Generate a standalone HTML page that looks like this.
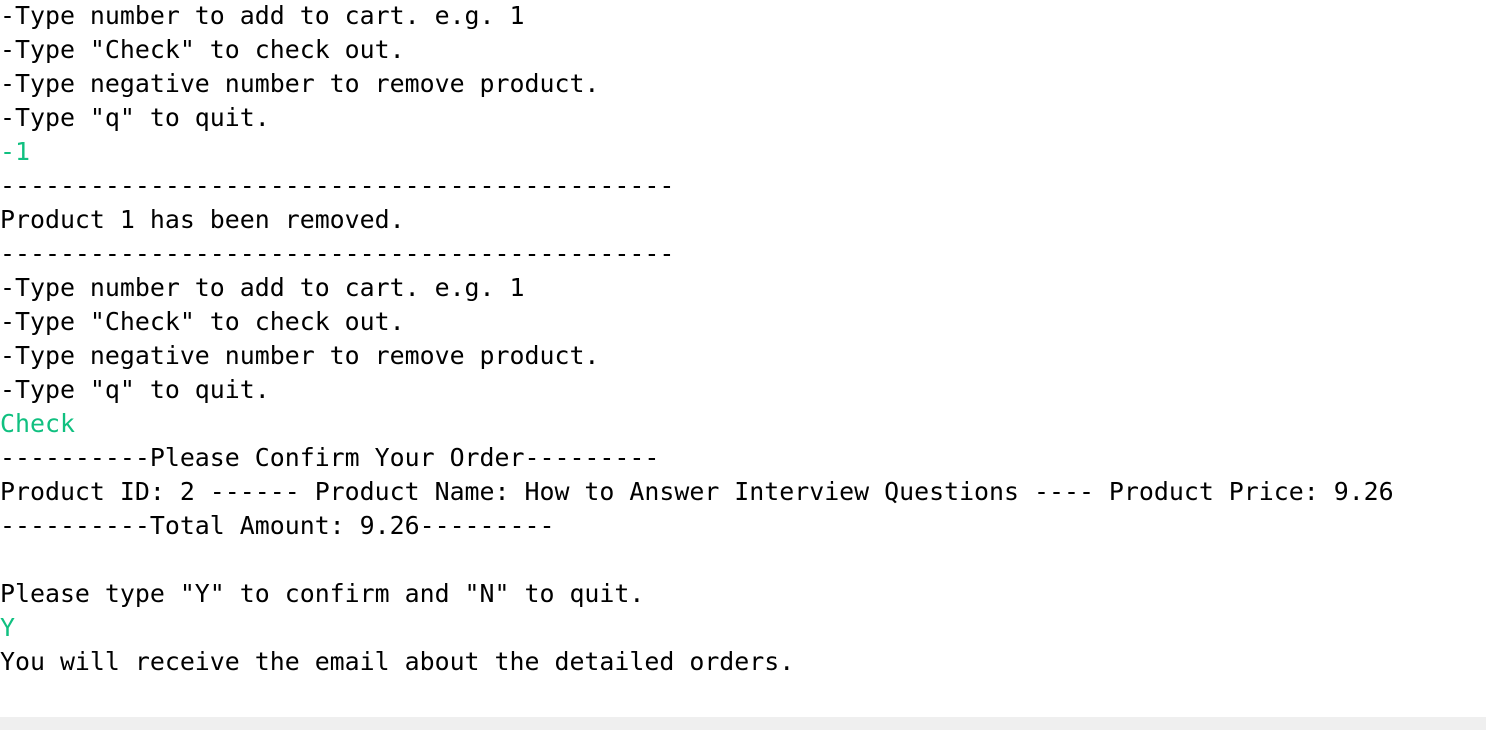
<!DOCTYPE html>
<html><head><meta charset="utf-8"><style>
html,body{margin:0;padding:0;width:1486px;height:730px;overflow:hidden;background:#fff}
pre{margin:0;position:absolute;left:0;top:-1px;font-family:"DejaVu Sans Mono","Liberation Mono",monospace;font-size:24.9px;line-height:34px;color:#000}
.g{color:#10c080}
.bar{position:absolute;left:0;top:717px;width:1486px;height:13px;background:#efefef}
</style></head><body>
<pre>-Type number to add to cart. e.g. 1
-Type "Check" to check out.
-Type negative number to remove product.
-Type "q" to quit.
<span class="g">-1</span>
---------------------------------------------
Product 1 has been removed.
---------------------------------------------
-Type number to add to cart. e.g. 1
-Type "Check" to check out.
-Type negative number to remove product.
-Type "q" to quit.
<span class="g">Check</span>
----------Please Confirm Your Order---------
Product ID: 2 ------ Product Name: How to Answer Interview Questions ---- Product Price: 9.26
----------Total Amount: 9.26---------

Please type "Y" to confirm and "N" to quit.
<span class="g">Y</span>
You will receive the email about the detailed orders.</pre>
<div class="bar"></div>
</body></html>
